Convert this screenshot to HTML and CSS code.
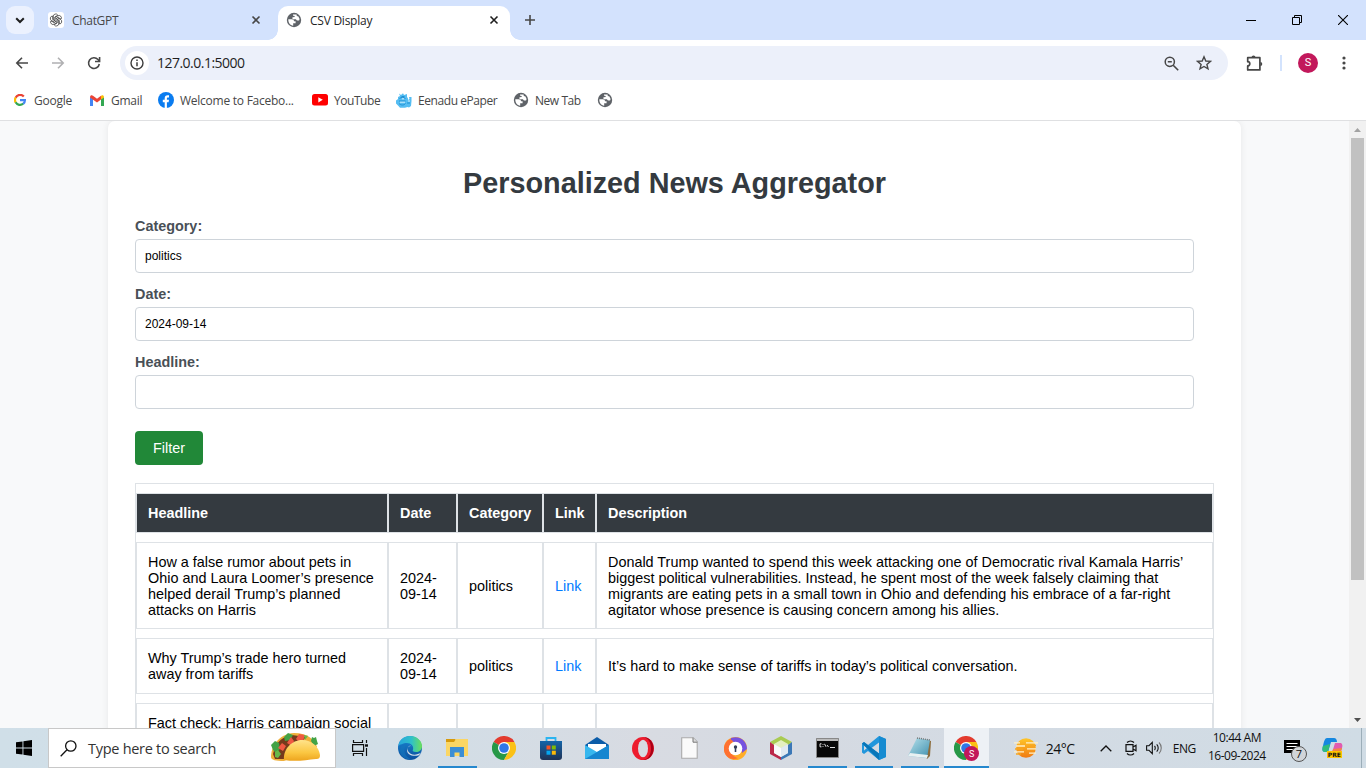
FILE: index.html
```html
<!DOCTYPE html>
<html lang="en">
<head>
<meta charset="utf-8">
<title>CSV Display</title>
<link rel="stylesheet" href="styles.css">
</head>
<body>
<svg width="0" height="0" class="defs">
  <defs>
    <linearGradient id="edgeA" x1="0" y1="0" x2="1" y2="0"><stop offset="0" stop-color="#27a5dc"/><stop offset=".55" stop-color="#2fc0c9"/><stop offset="1" stop-color="#6be05a"/></linearGradient>
    <linearGradient id="edgeB" x1="0" y1="0" x2="0" y2="1"><stop offset="0" stop-color="#1b8ad6"/><stop offset="1" stop-color="#0c4f9c"/></linearGradient>
    <linearGradient id="sun" x1="0" y1="0" x2="0" y2="1"><stop offset="0" stop-color="#ffc629"/><stop offset="1" stop-color="#f07a12"/></linearGradient>
    <linearGradient id="shell" x1="0" y1="0" x2="0" y2="1"><stop offset="0" stop-color="#ffe38b"/><stop offset=".6" stop-color="#fbc742"/><stop offset="1" stop-color="#eda41e"/></linearGradient>
    <linearGradient id="note" x1="0" y1="0" x2="1" y2="1"><stop offset="0" stop-color="#b9e3ec"/><stop offset="1" stop-color="#3e8fae"/></linearGradient>
    <linearGradient id="store" x1="0" y1="0" x2="0" y2="1"><stop offset="0" stop-color="#1464a8"/><stop offset="1" stop-color="#203356"/></linearGradient>
    <symbol id="globe" viewBox="0 0 16 16"><circle cx="8" cy="8" r="7.200" fill="#5f6368"/><path d="M2.300 7.200h3.400c1.600 0 2.300.8 2.300 2h1.600v2H7.200v2.500C4.200 13.500 2.200 10.500 2.300 7.200zM7 2.400h3.600c-.2 1.400.6 1.800 1.600 1.800l1.200 2.200c.3 1.600-.3 2.300-1.500 2.200-1 0-1.700-.5-1.900-1.400H7.300c-.9-.2-1.200-1-.8-1.900l2.300-.2c0-1.200-.7-1.500-1.800-1.400z" fill="#fff"/></symbol>
    <symbol id="chrome" viewBox="0 0 24 24"><path d="M12 12 1.600 6A12 12 0 0 1 22.400 6z" fill="#e33b2e"/><path d="M12 12 1.600 6A12 12 0 0 0 12 24l5-9z" fill="#279847"/><path d="M12 12h0l5 3-5 9A12 12 0 0 0 22.400 6H12z" fill="#fbc116"/><circle cx="12" cy="12" r="6" fill="#fff"/><circle cx="12" cy="12" r="4.800" fill="#2f77e8"/></symbol>
    <symbol id="x" viewBox="0 0 10 10"><path d="M1.500 1.500l7 7M8.500 1.500l-7 7" stroke="currentColor" stroke-width="1.600"/></symbol>
  </defs>
</svg>

<div class="screen">
  <header class="browser">
    <div class="tabs">
      <button class="tab-search"><svg width="10" height="7" viewBox="0 0 10 7"><path d="M1.200 1.200 5 5l3.800-3.800" fill="none" stroke="#1f1f1f" stroke-width="2"/></svg></button>
      <div class="tab">
        <span class="gpt"><svg width="14" height="14" viewBox="0 0 14 14" fill="none" stroke="#333" stroke-width=".7"><g id="petal"><path d="M4.300 6.800V3.400a2.400 2.400 0 0 1 4.500-1.200L5.800 4v3.700"/></g><use href="#petal" transform="rotate(60 7 7)"/><use href="#petal" transform="rotate(120 7 7)"/><use href="#petal" transform="rotate(180 7 7)"/><use href="#petal" transform="rotate(240 7 7)"/><use href="#petal" transform="rotate(300 7 7)"/></svg></span>
        <span class="tab-title">ChatGPT</span>
        <svg class="close" width="10" height="10"><use href="#x"/></svg>
      </div>
      <div class="tab active">
        <svg width="16" height="16"><use href="#globe"/></svg>
        <span class="tab-title csv">CSV Display</span>
        <svg class="close" width="10" height="10"><use href="#x"/></svg>
      </div>
      <svg class="plus" width="10" height="10" viewBox="0 0 10 10"><path d="M5 0v10M0 5h10" stroke="#474747" stroke-width="1.600"/></svg>
      <div class="window-controls">
        <svg width="10" height="10"><path d="M0 5.500h10" stroke="#000"/></svg>
        <svg width="10" height="10"><path d="M.5 2.500h7v7h-7zM2.500 2.500v-2h7v7h-2" fill="none" stroke="#000"/></svg>
        <svg width="10" height="10"><path d="M0 0l10 10M10 0L0 10" stroke="#000" stroke-width="1.100"/></svg>
      </div>
    </div>

    <div class="toolbar">
      <svg class="back" width="14" height="14" viewBox="0 0 14 14"><path d="M13 7H2M7 1.700 1.800 7 7 12.300" fill="none" stroke="#474747" stroke-width="1.600"/></svg>
      <svg class="forward" width="14" height="14" viewBox="0 0 14 14"><path d="M1 7h11M7 1.700 12.200 7 7 12.300" fill="none" stroke="#b0b0b2" stroke-width="1.600"/></svg>
      <svg class="reload" width="14" height="14" viewBox="0 0 14 14"><path d="M12.300 8A5.400 5.400 0 1 1 11 3.500L12.500 5M12.600 1v4.500H8" fill="none" stroke="#474747" stroke-width="1.600"/></svg>
      <div class="omnibox">
        <span class="info"><svg width="14" height="14" viewBox="0 0 14 14"><circle cx="7" cy="7" r="6" fill="none" stroke="#3c3c3c" stroke-width="1.400"/><path d="M7 6.200v4M7 3.500v1.500" stroke="#3c3c3c" stroke-width="1.500"/></svg></span>
        <span class="url">127.0.0.1:5000</span>
        <svg class="magnify" width="15" height="15" viewBox="0 0 15 15" fill="none" stroke="#474747"><circle cx="5.800" cy="5.800" r="4.600" stroke-width="1.500"/><path d="m9.200 9.200 5 5M3.800 5.800h4" stroke-width="1.600"/></svg>
        <svg class="star" width="16" height="16" viewBox="0 0 16 16"><path d="m8 1.800 1.800 4.200 4.700.4-3.600 3 1.100 4.500L8 11.500l-4 2.400 1.100-4.500-3.600-3L6.200 6z" fill="none" stroke="#474747" stroke-width="1.400"/></svg>
      </div>
      <svg class="puzzle" width="17" height="17" viewBox="0 0 17 17"><path d="M1.700 2.700h12.200v12.200H1.700v-4a2.100 2.100 0 0 0 0-4.200z" fill="none" stroke="#474747" stroke-width="1.700" stroke-linejoin="round"/><path d="M5.500 2.500a2 2 0 0 1 4 0zM14.300 7a2 2 0 0 1 0 4z" fill="#474747"/></svg>
      <i class="divider"></i>
      <span class="avatar">S</span>
      <svg class="dots" width="4" height="14" fill="#474747"><circle cx="2" cy="2" r="1.600"/><circle cx="2" cy="7" r="1.600"/><circle cx="2" cy="12" r="1.600"/></svg>
    </div>

    <nav class="bookmarks">
      <a class="bm google"><svg width="12" height="12" viewBox="0 0 12 12" fill="none" stroke-width="2.200"><path d="M9.800 2.500A5 5 0 0 0 1.600 3.700" stroke="#ea4335"/><path d="M1.700 3.500a5 5 0 0 0 0 5" stroke="#fbbc05"/><path d="M1.600 8.300a5 5 0 0 0 7.600 1.400" stroke="#34a853"/><path d="M6 6.200h4.900c0 1.500-.6 2.800-1.700 3.600" stroke="#4285f4"/></svg><span>Google</span></a>
      <a class="bm gmail"><svg width="14" height="11" viewBox="0 0 14 11"><path d="M0 2v9h3V4z" fill="#4285f4"/><path d="M14 2v9h-3V4z" fill="#34a853"/><path d="M0 2.500C0 0 2 0 3 .8l4 3 4-3v3.600L7 7.400 0 2.500z" fill="#ea4335"/><path d="M11 .8c1-.8 3-.8 3 1.700l-3 2.100z" fill="#fbbc04"/></svg><span>Gmail</span></a>
      <a class="bm facebook"><svg width="16" height="16" viewBox="0 0 16 16"><circle cx="8" cy="8" r="8" fill="#0a7cf0"/><path d="M6.700 16v-5.700H4.800V7.800h1.900V6.200c0-2 1.100-3 3-3l1.300.1v2.100h-1c-.9 0-1.100.4-1.100 1.100v1.300H11l-.4 2.500H8.900V16z" fill="#fff"/></svg><span>Welcome to Facebo...</span></a>
      <a class="bm youtube"><svg width="16" height="12" viewBox="0 0 16 12"><rect width="16" height="11.500" rx="2.500" fill="#f00"/><path d="m6.300 3.200 4.500 2.600-4.500 2.600z" fill="#fff"/></svg><span>YouTube</span></a>
      <a class="bm eenadu"><svg width="16" height="15" viewBox="0 0 16 15"><path d="M3 .5 5 2l2-1.700L8 2l3-1v3c1 1 1.300 2 1 3l1.500-1-.5-2h2.500v4l-.5 5-2 1.500-1.500-.5L9 14.800H4L1.500 12 0 10.500V7.500l2-1.500V4l2-1z" fill="#55bdf2"/><path d="M3.500 5.500c2-1.500 4-1.500 6 0M3 8h6.500M3 10.500c2 2 5 2 6.500 0M11 10h3M5.500 3.500h3" fill="none" stroke="#1e8fd2"/><path d="M4 9.200h5M12 8h2M6 5.800h2" stroke="#d3f0fd"/></svg><span>Eenadu ePaper</span></a>
      <a class="bm newtab"><svg width="16" height="16"><use href="#globe"/></svg><span>New Tab</span></a>
      <a class="bm blank"><svg width="16" height="16"><use href="#globe"/></svg></a>
    </nav>
  </header>

  <div class="viewport">
    <div class="page">
      <main class="container">
        <h1>Personalized News Aggregator</h1>
        <form>
          <label for="category">Category:</label>
          <input id="category" type="text" value="politics">
          <label for="date">Date:</label>
          <input id="date" type="text" value="2024-09-14">
          <label for="headline">Headline:</label>
          <input id="headline" type="text">
          <button type="button" class="filter">Filter</button>
        </form>
        <table>
          <colgroup><col class="c-headline"><col class="c-date"><col class="c-category"><col class="c-link"><col></colgroup>
          <thead><tr><th>Headline</th><th>Date</th><th>Category</th><th>Link</th><th>Description</th></tr></thead>
          <tbody>
            <tr class="tall"><td>How a false rumor about pets in<br>Ohio and Laura Loomer’s presence<br>helped derail Trump’s planned<br>attacks on Harris</td><td>2024-<br>09-14</td><td>politics</td><td><a href="#">Link</a></td><td>Donald Trump wanted to spend this week attacking one of Democratic rival Kamala Harris’<br>biggest political vulnerabilities. Instead, he spent most of the week falsely claiming that<br>migrants are eating pets in a small town in Ohio and defending his embrace of a far-right<br>agitator whose presence is causing concern among his allies.</td></tr>
            <tr class="short"><td>Why Trump’s trade hero turned<br>away from tariffs</td><td>2024-<br>09-14</td><td>politics</td><td><a href="#">Link</a></td><td>It’s hard to make sense of tariffs in today’s political conversation.</td></tr>
            <tr class="last"><td>Fact check: Harris campaign social</td><td></td><td></td><td></td><td></td></tr>
          </tbody>
        </table>
      </main>
    </div>
    <div class="scrollbar">
      <svg width="7" height="4"><path d="M0 4 3.500 0 7 4z" fill="#a3a3a3"/></svg>
      <i class="thumb"></i>
      <svg class="down" width="7" height="4"><path d="M0 0h7L3.500 4z" fill="#505050"/></svg>
    </div>
  </div>

  <footer class="taskbar">
    <div class="start"><svg width="16" height="16" viewBox="0 0 16 16"><path d="M0 2.300 6.500 1.400v6.100H0zM7.400 1.300 16 0v7.500H7.400zM0 8.400h6.500v6.200L0 13.700zM7.400 8.400H16V16l-8.600-1.300z"/></svg></div>
    <div class="search">
      <svg class="lens" width="17" height="17" viewBox="0 0 17 17" fill="none" stroke="#111" stroke-width="1.300"><circle cx="10.800" cy="6" r="5.200"/><path d="M7 9.800.7 16.200"/></svg>
      <span>Type here to search</span>
      <svg class="taco" width="50" height="30" viewBox="0 0 50 30">
        <path d="M1 25C1 15 8 2 24 1c14 0 21 7 23 14L14 29C6 29 1 28 1 25z" fill="#f0b03b"/>
        <path d="M3 22C5 14 9 5 22 3l14 2L16 27H5z" fill="#753b1c"/>
        <path d="m1 13 4-4 4 2 1 6-4 4-3-3zM14 5l4-4 5 2-3 5-5 1zM41 9l1-4 2 1 2-1 1 4 1 3-4 2z" fill="#43a346"/>
        <path d="m8 16 4-5 4 3-3 5zM17 11l4-6 3 4-2 5zM26 7l3-5 6 1-2 6-4 1z" fill="#ef5942"/>
        <path d="m5 20 3-2 3 4-3 4-3-1zM34 3l4 1-3 4z" fill="#68b84a"/>
        <path d="M14 28C13 17 22 8 32 8c10 0 17 7 18 15 0 3-1 4-4 4-10 1-20 3-32 1z" fill="url(#shell)"/>
      </svg>
    </div>
    <svg class="taskview" width="17" height="16" viewBox="0 0 17 16" fill="none" stroke="#111" stroke-width="1.200"><path d="M1.500 0v2.500h9V0M1.500 16v-2.500h9V16M.6 4.600h11v6.800H.6zM14.500 0v3M14.500 8v8"/><path d="M13 4.300h3v2.400h-3z" fill="#111" stroke="none"/></svg>
    <div class="apps">
      <div class="app"><svg width="24" height="24" viewBox="0 0 24 24"><circle cx="12" cy="12" r="12" fill="url(#edgeB)"/><path d="M.3 10C1 4 6 0 12 0c7 0 12 5 12 10 0 4-3 6-6 6-3 0-4-1-3-2.500C16 10 13 7 9 7S1.500 9 .3 10z" fill="url(#edgeA)"/><path d="M14 10.500c-2-2.500-6 1-4 4.500 2 4 8 5 13 1.500-1 1.500-1.500 2-2 2.700C15 21 9 19 9 14c0-2.500 3-5 5-3.500z" fill="#d6dee7"/><path d="M9 8.500c-4 3-4 12 5 15-7 1-12-4-12-9C2 10 5 8 9 8.500z" fill="#1474bd" opacity=".65"/></svg></div>
      <div class="app open"><svg width="22" height="20" viewBox="0 0 22 20"><path d="M0 1h9l2 2h-2v3H0z" fill="#d79a0b"/><path d="M0 4h8l2-3h12v17H0z" fill="#fbd664"/><path d="M4 9h14v10h-4.500v-4.500h-5V19H4z" fill="#3b8ed5"/></svg></div>
      <div class="app"><svg width="24" height="24"><use href="#chrome"/></svg></div>
      <div class="app"><svg width="24" height="24" viewBox="0 0 24 24"><path d="M7.500 6V2h9v4" fill="none" stroke="#2bb4f0" stroke-width="1.800"/><path d="M1 5h22v16a3 3 0 0 1-3 3H4a3 3 0 0 1-3-3z" fill="url(#store)"/><path d="M7.500 9.500h4v4h-4z" fill="#f35325"/><path d="M12.800 9.500h4v4h-4z" fill="#81bc06"/><path d="M7.500 14.700h4v4h-4z" fill="#05a6f0"/><path d="M12.800 14.700h4v4h-4z" fill="#ffba08"/></svg></div>
      <div class="app"><svg width="24" height="22" viewBox="0 0 24 22"><path d="M0 8 12 0l12 8v3H0z" fill="#0b5ca8"/><path d="M3 7h18v8H3z" fill="#fff"/><path d="m0 8 12 7 12-7v14H0z" fill="#37b7ee"/><path d="M0 22 24 8v14z" fill="#1686d0"/></svg></div>
      <div class="app"><svg width="22" height="23" viewBox="0 0 22 23"><ellipse cx="11" cy="11.500" rx="11" ry="11.500" fill="#ed1c2e"/><path d="M11 0c14 0 14 23 0 23 5-1 8-5 8-11.500S16 1 11 0z" fill="#a90016"/><ellipse cx="11" cy="11.500" rx="5" ry="8.800" fill="#d7dbe2"/></svg></div>
      <div class="app"><svg width="17" height="22" viewBox="0 0 17 22"><path d="M.7.700h11.500l4 4v16.500H.7z" fill="#fafafa" stroke="#aaa" stroke-width="1.100"/><path d="M12 .7v4.500h4.300" fill="#ddd" stroke="#777"/></svg></div>
      <div class="app"><svg width="23" height="23" viewBox="0 0 23 23"><circle cx="11.500" cy="11.500" r="11.500" fill="#ffad28"/><path d="M7 1c9-3 16 3 16 11l-5 4C18 8 13 5 6 4z" fill="#7752df"/><path d="M6 2C-2 6-2 17 5 21c4 2 7 1 9 0C7 19 3 12 9 4z" fill="#ff7131"/><circle cx="11.500" cy="11.500" r="6.800" fill="#fff"/><circle cx="11.500" cy="10" r="1.700" fill="#333e59"/><path d="M10.700 10h1.600v5h-1.600z" fill="#333e59"/></svg></div>
      <div class="app"><svg width="22" height="24" viewBox="0 0 22 24"><path d="M0 6 11 0l11 6-4 3-7-4-7 4z" fill="#a9cb51"/><path d="m0 6 4 3v8l7 4v3L0 18z" fill="#bb2849"/><path d="m22 6-4 3v8l-7 4v3l11-6z" fill="#3c78b7"/><path d="m4 8 7-4 7 4-7 4z" fill="#e5efc0"/><path d="M4 8v9l7 4v-9z" fill="#f9f9fb"/><path d="M18 8v9l-7 4v-9z" fill="#e1e9f2"/></svg></div>
      <div class="app open"><svg width="23" height="20" viewBox="0 0 23 20"><path d="M.5.500h22v19H.5z" fill="#080808" stroke="#888"/><path d="M1 1h21v2H1z" fill="#bbb"/><path d="M5.500 5.800H4v3h1.500M7 6v.8M7 8v.8M8.500 5.800l1.500 3M14 9.500h5M11 7l1.500 2" stroke="#ddd" fill="none"/></svg></div>
      <div class="app open"><svg width="24" height="24" viewBox="0 0 24 24"><path d="m17 0 7 3v18l-7 3-11-9-4 3-2-1.500V7.500L2 6l4 3zM17 6.500 9.500 12l7.500 5.500zM2 9.500v5L5 12z" fill="#2196dc" fill-rule="evenodd"/><path d="m17 0 7 3v18l-7 3z" fill="#168bd1"/><path d="M2 6 0 7.500l17 16.500v-6.500z" fill="#0876b9"/></svg></div>
      <div class="app open"><svg width="24" height="22" viewBox="0 0 24 22"><path d="M10 2 23 4l-1 15-3 3z" fill="#8c6c3c"/><path d="m9 1 13 2-3 18-19-2z" fill="url(#note)"/><path d="m0 19 19 2 1-3-18-2z" fill="#e8f1f2"/><path d="m9 1 13 2" stroke="#777" stroke-width="1.500" stroke-dasharray="1 1"/></svg></div>
      <div class="app open current"><svg width="25" height="25" viewBox="0 0 25 25"><use href="#chrome" width="24" height="24"/><circle cx="17.500" cy="17.500" r="7.500" fill="#c2185b"/></svg><b>S</b></div>
    </div>
    <svg class="weather" width="24" height="20" viewBox="0 0 24 20"><circle cx="12" cy="10" r="9.800" fill="url(#sun)"/><path d="M0 4.800h6M12 4.800h12M2 8h9M0 13.800h10M13 10.800h9M15 15.200h7" stroke="#fff1c9" stroke-width="1.300"/><path d="M1 11h8M16 7.500h6M2 16h5" stroke="#f7a721" stroke-width="1.300"/></svg>
    <span class="temp">24°C</span>
    <svg class="chevron" width="12" height="7" viewBox="0 0 12 7"><path d="M.7 6.300 6 1l5.300 5.300" fill="none" stroke="#111" stroke-width="1.300"/></svg>
    <svg class="meet" width="12" height="16" viewBox="0 0 12 16" fill="none" stroke="#111" stroke-width="1.200"><path d="M1 4.600h7v6.800H1zM8 7l3-1.800v5.600L8 9M2 2.500c2-2 5-2 7 0M2 13.500c2 2 5 2 7 0"/></svg>
    <svg class="sound" width="17" height="14" viewBox="0 0 17 14" fill="none" stroke="#111" stroke-width="1.100"><path d="M.6 4.700H3l3.300-3.300v11.200L3 9.300H.6zM8.500 5c1 1 1 3 0 4M10.700 3.300c2 2 2 5.400 0 7.400"/><path d="M13 1.500c3 3 3 8 0 11" stroke="#777"/></svg>
    <span class="lang">ENG</span>
    <div class="clock"><span>10:44 AM</span><span class="day">16-09-2024</span></div>
    <div class="notice"><svg width="16" height="17" viewBox="0 0 16 17"><path d="M0 0h16v13h-4v4l-4-4H0z"/><path d="M2.500 3.500h11M2.500 6.500h11M2.500 9.500h7" stroke="#fff"/></svg><span>7</span></div>
    <div class="copilot"><svg width="21" height="20" viewBox="0 0 21 20"><path d="M5 0h7c2 0 3 2 3 4H9L6 14H3c-3 0-3-3-2-6 1-5 2-8 4-8z" fill="#1688e0"/><path d="M1 8 8 6 6 14H3c-3 0-3-3-2-6z" fill="#2fbd7b"/><path d="M13 5h5c2 0 3 2 2 5s-2 8-5 8H9z" fill="#e15bb0"/><path d="m11 11 9-1c-1 4-2 8-5 8H9z" fill="#f38545"/></svg><b>PRE</b></div>
    <i class="peek"></i>
  </footer>
</div>
</body>
</html>
```
FILE: styles.css
```css
* { box-sizing: border-box; }
body { margin: 0; overflow: hidden; font-family: "Open Sans", "Noto Sans", sans-serif; color: #1f1f1f; }
svg { display: block; flex: none; }
.defs { position: absolute; }
.screen { width: 1366px; height: 768px; display: flex; flex-direction: column; overflow: hidden; background: #fff; }

/* browser frame */
.browser { flex: none; height: 121px; border-bottom: 1px solid #dfe0e2; background: #fff; }
.tabs { height: 40px; display: flex; background: #d3e2fd; }
.tab-search { width: 28px; height: 28px; margin: 6px 0 0 6px; padding: 0; border: 0; border-radius: 9px; background: #ebf1fe; display: grid; place-items: center; }
.tab { width: 230px; height: 34px; margin: 6px 0 0 14px; display: flex; align-items: center; padding: 0 17px 6px 0; font-size: 12px; color: #474747; }
.tab-title { margin-left: 8px; letter-spacing: -0.32px; white-space: nowrap; }
.tab-title.csv { letter-spacing: -0.25px; }
.close { margin-left: auto; }
.gpt { width: 16px; height: 16px; border-radius: 3px; background: #fff; display: grid; place-items: center; }
.tab.active { position: relative; width: 232px; margin-left: 0; padding: 0 11px 6px 8px; color: #1f1f1f; background: #fff; border-radius: 10px 10px 0 0; }
.tab.active::before, .tab.active::after { content: ""; position: absolute; bottom: 0; width: 10px; height: 10px; }
.tab.active::before { left: -10px; background: radial-gradient(circle at 0 0, #d3e2fd 9.5px, #fff 10px); }
.tab.active::after { right: -10px; background: radial-gradient(circle at 100% 0, #d3e2fd 9.5px, #fff 10px); }
.plus { margin: 15px 0 0 15px; }
.window-controls { display: flex; gap: 36px; margin: 15px 18px 0 auto; }

.toolbar { height: 46px; display: flex; align-items: center; padding: 0 20px 0 15px; }
.forward { margin-left: 22px; }
.reload { margin-left: 22px; }
.omnibox { width: 1108px; height: 34px; margin-left: 19px; border-radius: 17px; background: #ecf0fa; display: flex; align-items: center; padding: 0 16px 0 5px; }
.info { width: 24px; height: 24px; border-radius: 50%; background: #fff; display: grid; place-items: center; }
.url { margin-left: 8px; padding-bottom: 1px; font-size: 14px; letter-spacing: -0.52px; }
.magnify { margin-left: auto; }
.star { margin-left: 17px; }
.puzzle { margin-left: 18px; }
.divider { width: 2px; height: 16px; margin-left: 17px; background: #d3e3fd; }
.avatar { width: 20px; height: 20px; margin-left: 16px; border-radius: 50%; background: #c2185b; color: #fff; font: 11px/20px Roboto, sans-serif; text-align: center; }
.dots { margin-left: 24px; }

.bookmarks { height: 28px; display: flex; align-items: center; padding-left: 14px; font-size: 12px; color: #474747; }
.bm { display: flex; align-items: center; flex: none; white-space: nowrap; letter-spacing: -0.25px; }
.google { width: 76px; gap: 8px; }
.gmail { width: 68px; gap: 7px; }
.facebook { width: 154px; gap: 6px; }
.youtube { width: 84px; gap: 6px; letter-spacing: -0.45px; }
.eenadu { width: 117px; gap: 6px; letter-spacing: -0.43px; }
.newtab { width: 84px; gap: 6px; letter-spacing: -0.45px; }

/* page */
.viewport { height: 607px; display: flex; overflow: hidden; }
.page { width: 1349px; background: #f8f9fa; padding: 0 108px; overflow: hidden; font-family: "Liberation Sans", Arial, sans-serif; color: #000; font-size: 14.4px; line-height: 16px; }
.container { width: 1133px; height: 700px; padding: 45px 27px 0; background: #fff; border-radius: 7px; box-shadow: 0 0 7px rgba(0,0,0,.08); }
h1 { margin: 0 0 18px; font-size: 28.8px; line-height: 34px; color: #343a40; text-align: center; }
form { display: flex; flex-direction: column; align-items: flex-start; }
label { font-weight: bold; color: #495057; margin-bottom: 5px; }
input { width: 1059px; height: 34px; margin: 0 0 13px; padding: 0 9px; border: 1px solid #ced4da; border-radius: 4px; font: 12px "Liberation Sans", Arial, sans-serif; color: #000; background: #fff; }
.filter { width: 68px; height: 34px; margin: 9px 0 18px; padding: 0; border: 0; border-radius: 4px; background: #218838; color: #fff; font: 14.4px "Liberation Sans", Arial, sans-serif; }
table { width: 1079px; table-layout: fixed; border: 1px solid #dee2e6; border-collapse: separate; border-spacing: 0 9px; }
.c-headline { width: 252px; }
.c-date { width: 69px; }
.c-category { width: 86px; }
.c-link { width: 53px; }
th, td { border: 1px solid #dee2e6; padding: 10px 0 10px 11px; text-align: left; vertical-align: middle; white-space: nowrap; }
th { height: 40px; background: #343a40; color: #fff; }
.tall td { height: 87px; }
.short td { height: 56px; }
.last td { height: 87px; padding-top: 11px; vertical-align: top; }
td a { color: #007bff; text-decoration: none; }
.scrollbar { width: 17px; background: #f1f1f1; display: flex; flex-direction: column; align-items: center; padding: 7px 0 6px; }
.thumb { width: 13px; height: 442px; margin-top: 6px; background: #c1c1c1; }
.down { margin-top: auto; }

/* taskbar */
.taskbar { flex: none; height: 40px; display: flex; align-items: center; background: linear-gradient(90deg, #d0dfe8 0, #d1dee7 390px, #d8dbe2 650px, #d5dae2 800px, #d0dce5 1366px); color: #111; }
.start { width: 48px; display: grid; place-items: center; }
.search { width: 288px; height: 40px; display: flex; align-items: center; background: #fff; border: 1px solid #c8c8c8; padding-left: 11px; font-size: 14.5px; }
.search span { width: 182px; margin-left: 11px; letter-spacing: -0.28px; white-space: nowrap; color: #333; }
.taco { margin-bottom: 2px; }
.taskview { margin-left: 16px; }
.apps { height: 40px; margin-left: 18px; display: grid; grid-template-columns: repeat(4, 46.750px) repeat(9, 46.100px); }
.app { position: relative; display: grid; place-items: center; }
.open::after { content: ""; position: absolute; left: 4px; right: 4px; bottom: 0; height: 2px; background: #2588ce; }
.current { background: #edf1f5; width: 45px; margin-left: 1px; }
.current::after { left: 0; right: 0; }
.current b { position: absolute; left: 24px; top: 19px; width: 8px; color: #fff; font: 9px/14px Roboto, sans-serif; text-align: center; }
.weather { margin-left: 25px; }
.temp { width: 32px; margin-left: 8px; font-size: 14px; letter-spacing: -0.5px; white-space: nowrap; }
.chevron { margin-left: 22px; }
.meet { margin-left: 13px; }
.sound { margin-left: 9px; }
.lang { width: 24px; margin-left: 10px; font-size: 12px; letter-spacing: -0.5px; }
.clock { width: 60px; height: 40px; padding-top: 1px; margin-left: 10px; display: flex; flex-direction: column; align-items: center; font-size: 12px; line-height: 18px; letter-spacing: -0.48px; white-space: nowrap; }
.notice { position: relative; margin-left: 17px; padding-top: 1px; }
.notice span { position: absolute; left: 7px; top: 7px; width: 16px; height: 16px; border: 1px solid #555; border-radius: 50%; background: #d1d5d9; font-size: 11px; line-height: 14px; text-align: center; }
.copilot { position: relative; margin-left: 22px; }
.copilot b { position: absolute; left: 5px; top: 13px; width: 15px; height: 7px; background: #ffc400; font: bold 6px/7px "DejaVu Sans", sans-serif; text-align: center; }
.peek { width: 1px; height: 40px; margin-left: auto; margin-right: 4px; background: #9caeb9; }
```
